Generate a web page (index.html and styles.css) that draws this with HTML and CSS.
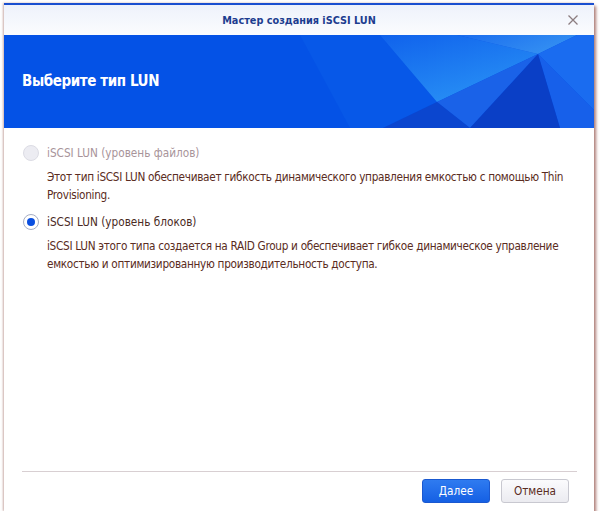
FILE: index.html
```html
<!DOCTYPE html>
<html lang="ru">
  <head>
    <meta charset="UTF-8" />
    <title>Мастер создания iSCSI LUN</title>
    <link rel="stylesheet" href="styles.css">
  </head>
  <body>
    <div class="window">
      <div class="titlebar">
        <span class="title">Мастер создания iSCSI LUN</span>
        <svg class="close" width="10" height="10" viewBox="0 0 10 10">
          <path d="M0.5 0.5 L9.5 9.5 M9.5 0.5 L0.5 9.5" stroke="#8c7d80" stroke-width="1.3" fill="none"/>
        </svg>
      </div>
      <div class="banner">
        <svg class="facets" viewBox="0 0 590 93" preserveAspectRatio="none">
          <defs>
            <linearGradient id="glow" x1="0" y1="0" x2="0.6" y2="1">
              <stop offset="0" stop-color="#1062ec"/>
              <stop offset="1" stop-color="#2890f5"/>
            </linearGradient>
            <linearGradient id="top" x1="0" y1="0" x2="1" y2="0.4">
              <stop offset="0" stop-color="#1a6cee"/>
              <stop offset="1" stop-color="#3490f2"/>
            </linearGradient>
          </defs>
          <polygon points="296,0 376,0 433,67 379,93 346,93" fill="#0758e8"/>
          <polygon points="376,0 453,0 534,19 433,67" fill="url(#glow)"/>
          <polygon points="453,0 573,0 534,19" fill="url(#top)"/>
          <polygon points="573,0 590,0 590,75 534,19" fill="#1a6cf0"/>
          <polygon points="534,19 590,75 590,93 556,93" fill="#1760ea"/>
          <polygon points="433,67 534,19 466,93" fill="#1a62e8"/>
          <polygon points="433,67 466,93 379,93" fill="#0b46cf"/>
          <polygon points="534,19 556,93 466,93" fill="#0a3fc6"/>
        </svg>
        <h1>Выберите тип LUN</h1>
      </div>
      <div class="content">
        <label class="option disabled">
          <span class="radio"></span>
          <span>iSCSI LUN (уровень файлов)</span>
        </label>
        <p class="desc">Этот тип iSCSI LUN обеспечивает гибкость динамического управления емкостью с помощью Thin Provisioning.</p>
        <label class="option">
          <span class="radio checked"></span>
          <span>iSCSI LUN (уровень блоков)</span>
        </label>
        <p class="desc">iSCSI LUN этого типа создается на RAID Group и обеспечивает гибкое динамическое управление емкостью и оптимизированную производительность доступа.</p>
      </div>
      <div class="footer">
        <button class="btn primary">Далее</button>
        <button class="btn">Отмена</button>
      </div>
    </div>
  </body>
</html>
```

FILE: styles.css
```css
body {
  margin: 0;
  background: #fff;
  font-family: "DejaVu Sans Condensed", "DejaVu Sans", sans-serif;
  font-size: 11.7px;
}

.window {
  margin: 3px 0 0 4px;
  width: 590px;
  height: 508px;
  display: flex;
  flex-direction: column;
  background: #fff;
  border-top: 2px solid #1a4fd0;
  box-sizing: border-box;
  box-shadow: 2px 3px 3px rgba(140, 70, 60, 0.7), -1px 0 2px rgba(160, 110, 100, 0.5);
}

.titlebar {
  height: 30px;
  display: flex;
  align-items: center;
  justify-content: center;
  position: relative;
  background: linear-gradient(#eef2fb, #fbfcfe);
}

.title {
  color: #1d3d8f;
  font-weight: bold;
  font-size: 10.8px;
}

.close {
  position: absolute;
  right: 16px;
  top: 10px;
}

.banner {
  height: 93px;
  background: #0452e6;
  position: relative;
  display: flex;
  align-items: center;
  overflow: hidden;
}

.facets {
  position: absolute;
  left: 0;
  top: 0;
  width: 100%;
  height: 100%;
}

.banner h1 {
  position: relative;
  margin: 0 0 2px 18px;
  color: #fff;
  font-size: 15px;
  letter-spacing: -0.4px;
  font-weight: bold;
}

.content {
  flex: 1;
  padding: 15px 18px 0 19px;
}

.option {
  display: flex;
  align-items: center;
  gap: 8px;
  height: 20px;
  color: #4a2a24;
}

.option.disabled {
  color: #a8949a;
}

.radio {
  width: 16px;
  height: 16px;
  border-radius: 50%;
  box-sizing: border-box;
  border: 1px solid #a6aec4;
  background: #fff;
  position: relative;
}

.disabled .radio {
  border-color: #dcdce4;
  background: #ececf2;
}

.radio.checked::after {
  content: "";
  position: absolute;
  left: 3px;
  top: 3px;
  width: 8px;
  height: 8px;
  border-radius: 50%;
  background: #0a4fe0;
}

.desc {
  margin: 5px 0 8px 24px;
  line-height: 18px;
  letter-spacing: -0.3px;
  color: #5a2c22;
}

.footer {
  margin: 0 17px 0 18px;
  border-top: 1px solid #d8cfd2;
  height: 38px;
  display: flex;
  align-items: center;
  justify-content: flex-end;
  gap: 11px;
  padding: 0 8px 1px 0;
}

.btn {
  height: 24px;
  width: 68px;
  border-radius: 3px;
  border: 1px solid #c8c8d0;
  background: linear-gradient(#fbfbfd, #ebebf0);
  color: #5a2c22;
  font-family: "DejaVu Sans Condensed", "DejaVu Sans", sans-serif;
  font-size: 11.7px;
  padding: 0;
}

.btn.primary {
  border-color: #1a58d0;
  background: linear-gradient(#2f7bf0, #1560e4);
  color: #fff;
}
```
